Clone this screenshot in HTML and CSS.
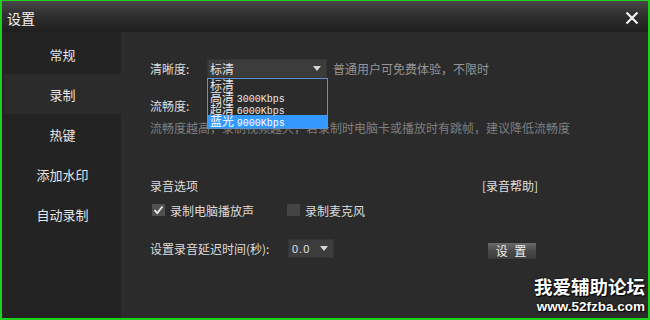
FILE: index.html
```html
<!DOCTYPE html>
<html lang="zh-cn">
<head>
    <meta charset="UTF-8">
    <title>设置</title>
    <link rel="stylesheet" href="styles.css">
</head>
<body>
    <div class="window">
        <div class="titlebar">
            <span class="title">设置</span>
            <svg class="close" width="14" height="14" viewBox="0 0 14 14">
                <path d="M1.5 1.5 L12.5 12.5 M12.5 1.5 L1.5 12.5" stroke="#f2f2f2" stroke-width="2.2"/>
            </svg>
        </div>
        <div class="main">
            <!-- 左侧菜单 -->
            <div class="sidebar">
                <div class="nav-item">常规</div>
                <div class="nav-item active">录制</div>
                <div class="nav-item">热键</div>
                <div class="nav-item">添加水印</div>
                <div class="nav-item">自动录制</div>
            </div>

            <!-- 录制设置 -->
            <div class="content">
                <div class="row row-quality">
                    <span class="label label-short">清晰度:</span>
                    <div class="combo combo-wide">
                        <span>标清</span>
                        <span class="arrow"></span>
                    </div>
                    <span class="hint">普通用户可免费体验，不限时</span>
                    <ul class="dropdown">
                        <li>标清</li>
                        <li>高清 <span class="rate">3000Kbps</span></li>
                        <li>超清 <span class="rate">6000Kbps</span></li>
                        <li class="selected">蓝光 <span class="rate">9000Kbps</span></li>
                    </ul>
                </div>
                <div class="row row-fluency">
                    <span class="label">流畅度:</span>
                </div>
                <div class="desc">流畅度越高，录制视频越大，若录制时电脑卡或播放时有跳帧，建议降低流畅度</div>

                <div class="row row-audio">
                    <span class="section-title">录音选项</span>
                    <span class="help">[录音帮助]</span>
                </div>
                <div class="row row-checks">
                    <label class="check-item">
                        <span class="checkbox checked">
                            <svg width="11" height="10" viewBox="0 0 11 10"><path d="M1.5 5 L4.2 8 L9.5 1.5" fill="none" stroke="#f4eaf0" stroke-width="1.8"/></svg>
                        </span>
                        录制电脑播放声
                    </label>
                    <label class="check-item">
                        <span class="checkbox"></span>
                        录制麦克风
                    </label>
                </div>
                <div class="row row-delay">
                    <span class="label label-long">设置录音延迟时间(秒):</span>
                    <div class="combo combo-small">
                        <span class="num">0.0</span>
                        <span class="arrow"></span>
                    </div>
                    <button class="btn">设 置</button>
                </div>

                <div class="watermark">
                    <div class="wm-name">我爱辅助论坛</div>
                    <div class="wm-url">www.52fzba.com</div>
                </div>
            </div>
        </div>
    </div>
</body>
</html>
```

FILE: styles.css
```css
* {
    box-sizing: border-box;
}

body {
    margin: 0;
    background: #2b2b2b;
    font-family: "Noto Sans CJK SC", "Liberation Sans", sans-serif;
    font-size: 12px;
    color: #dcdcdc;
}

.window {
    width: 650px;
    height: 320px;
    border: 2px solid #1ed01e;
    border-top-width: 1px;
    display: flex;
    flex-direction: column;
    background: #2b2b2b;
}

.titlebar {
    height: 31px;
    flex: none;
    display: flex;
    align-items: center;
    justify-content: space-between;
    padding: 0 9px 0 5px;
    background: linear-gradient(#4a4a4a, #333333 35%, #1f1f1f);
}

.title {
    font-size: 14px;
    color: #f4f4f4;
    line-height: 14px;
    margin-top: 2px;
}

.close {
    display: block;
    margin-top: 2px;
}

.main {
    flex: 1;
    display: flex;
}

.sidebar {
    width: 119px;
    flex: none;
    background: #232323;
    padding-top: 2px;
}

.nav-item {
    height: 40px;
    display: flex;
    align-items: center;
    justify-content: center;
    font-size: 13px;
    color: #e6e6e6;
    margin-left: 2px;
}

.nav-item.active {
    background: #2b2b2b;
}

.content {
    flex: 1;
    position: relative;
    padding: 27px 0 0 29px;
    background: #2b2b2b;
}

.row {
    display: flex;
    align-items: center;
}

.label-short {
    width: 57px;
}

.label-long {
    width: 138px;
}

.combo {
    height: 19px;
    background: #3c3c3c;
    border: 1px solid #343434;
    display: flex;
    align-items: center;
    justify-content: space-between;
    padding: 0 5px 0 2px;
    color: #e0e0e0;
}

.combo-wide {
    width: 120px;
}

.combo-small {
    width: 46px;
    padding-left: 3px;
}

.num {
    font-family: "Liberation Sans", sans-serif;
    font-size: 11px;
    letter-spacing: 1px;
}

.arrow {
    width: 0;
    height: 0;
    border-left: 4px solid transparent;
    border-right: 4px solid transparent;
    border-top: 5px solid #d6d6d6;
}

.hint {
    margin-left: 6px;
    color: #959595;
}

.row-quality {
    position: relative;
    height: 19px;
}

.dropdown {
    position: absolute;
    left: 57px;
    top: 19px;
    width: 121px;
    margin: 0;
    padding: 0;
    list-style: none;
    border: 1px solid #5d93cf;
    background: #2b2b2b;
    z-index: 2;
}

.dropdown li {
    height: 12px;
    line-height: 12px;
    padding-left: 2px;
    font-size: 12px;
    color: #e8e8e8;
}

.dropdown li.selected {
    height: 12.5px;
    background: #3399ff;
    color: #ffffff;
}

.rate {
    font-family: "Liberation Mono", monospace;
    font-size: 10px;
}

.row-fluency {
    margin-top: 18px;
    height: 18px;
}

.desc {
    margin-top: 5px;
    height: 18px;
    line-height: 18px;
    color: #7f7f7f;
}

.row-audio {
    margin-top: 39px;
    height: 18px;
}

.section-title {
    width: 332px;
}

.help {
    color: #e0e0e0;
}

.row-checks {
    margin-top: 7px;
    height: 18px;
}

.check-item {
    width: 135px;
    display: flex;
    align-items: center;
    padding-left: 2px;
}

.checkbox {
    width: 13px;
    height: 12px;
    margin-right: 5px;
    background: #444444;
    display: flex;
    align-items: center;
    justify-content: center;
}

.checkbox.checked {
    background: #505050;
}

.checkbox svg {
    display: block;
}

.row-delay {
    margin-top: 20px;
    align-items: flex-start;
}

.row-delay .label {
    line-height: 19px;
}

.btn {
    margin: 3px 0 0 153px;
    width: 50px;
    height: 18px;
    padding: 0;
    border: 1px solid #2a2a2a;
    background: linear-gradient(#6a6a6a, #4a4a4a 50%, #3c3c3c);
    color: #f0f0f0;
    font-family: "Noto Sans CJK SC", sans-serif;
    font-size: 12px;
    line-height: 16px;
    letter-spacing: 2px;
}

.watermark {
    position: absolute;
    right: 3px;
    bottom: 3px;
    text-align: right;
    color: #ffffff;
    text-shadow: 0 0 2px #000, 1px 1px 1px #000;
}

.wm-name {
    font-size: 18.5px;
    font-weight: bold;
    line-height: 22px;
}

.wm-url {
    font-family: "Liberation Sans", sans-serif;
    font-size: 13.5px;
    font-weight: bold;
    line-height: 16px;
    margin-top: 2px;
}
```
